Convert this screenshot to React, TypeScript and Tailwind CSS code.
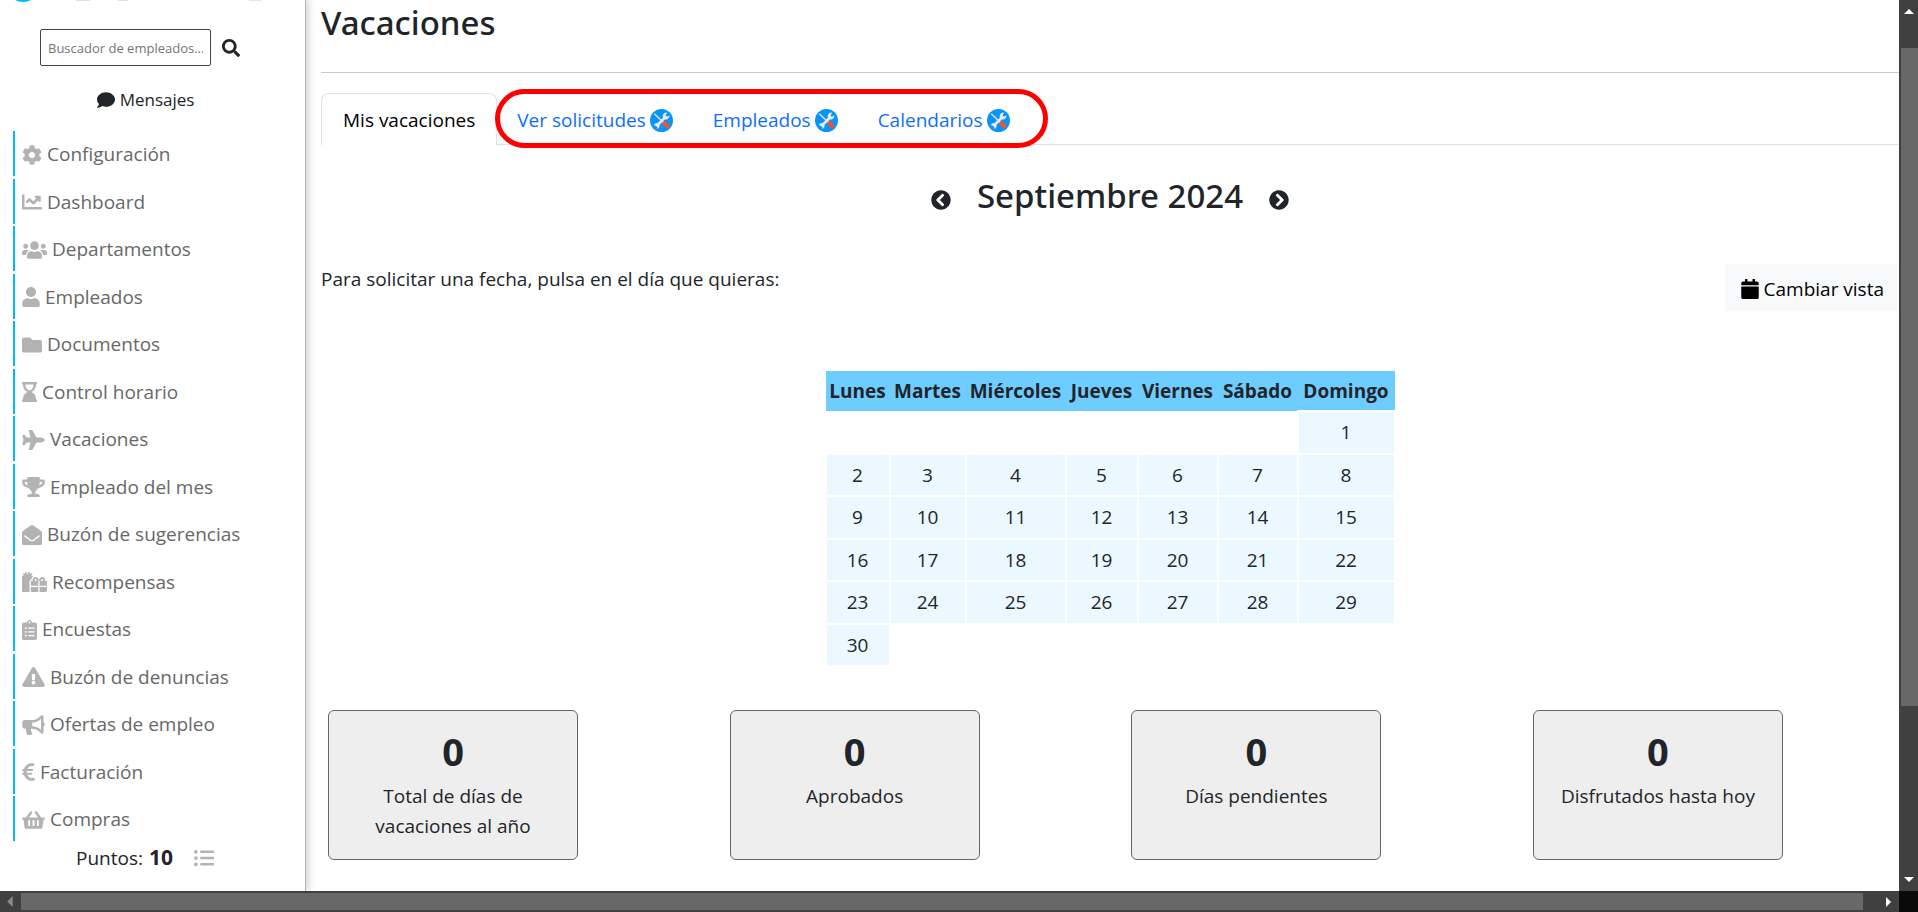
import type { ReactNode } from "react";
import type { IconType } from "react-icons";
import {
    FaBullhorn,
    FaCalendar,
    FaChartLine,
    FaChevronCircleLeft,
    FaChevronCircleRight,
    FaClipboardList,
    FaCog,
    FaComment,
    FaEnvelopeOpen,
    FaEuroSign,
    FaExclamationTriangle,
    FaFolder,
    FaGifts,
    FaHourglassEnd,
    FaListUl,
    FaPlane,
    FaSearch,
    FaShoppingBasket,
    FaTrophy,
    FaUser,
    FaUsers,
} from "react-icons/fa";

type MenuItem = {
    label: string
    icon: IconType
    width: string
}

const menu: MenuItem[] = [
    { label: 'Configuración', icon: FaCog, width: 'w-5' },
    { label: 'Dashboard', icon: FaChartLine, width: 'w-5' },
    { label: 'Departamentos', icon: FaUsers, width: 'w-[25px]' },
    { label: 'Empleados', icon: FaUser, width: 'w-[18px]' },
    { label: 'Documentos', icon: FaFolder, width: 'w-5' },
    { label: 'Control horario', icon: FaHourglassEnd, width: 'w-[15px]' },
    { label: 'Vacaciones', icon: FaPlane, width: 'w-[23px]' },
    { label: 'Empleado del mes', icon: FaTrophy, width: 'w-[23px]' },
    { label: 'Buzón de sugerencias', icon: FaEnvelopeOpen, width: 'w-5' },
    { label: 'Recompensas', icon: FaGifts, width: 'w-[25px]' },
    { label: 'Encuestas', icon: FaClipboardList, width: 'w-[15px]' },
    { label: 'Buzón de denuncias', icon: FaExclamationTriangle, width: 'w-[23px]' },
    { label: 'Ofertas de empleo', icon: FaBullhorn, width: 'w-[23px]' },
    { label: 'Facturación', icon: FaEuroSign, width: 'w-[13px]' },
    { label: 'Compras', icon: FaShoppingBasket, width: 'w-[23px]' },
]

const adminTabs = ['Ver solicitudes', 'Empleados', 'Calendarios']

const days = [
    { name: 'Lunes', width: 'w-16' },
    { name: 'Martes', width: 'w-[76px]' },
    { name: 'Miércoles', width: 'w-[100px]' },
    { name: 'Jueves', width: 'w-[72px]' },
    { name: 'Viernes', width: 'w-20' },
    { name: 'Sábado', width: 'w-20' },
    { name: 'Domingo', width: 'w-[97px]' },
]

// Septiembre 2024 empieza en domingo
const weeks: (number | null)[][] = [
    [null, null, null, null, null, null, 1],
    [2, 3, 4, 5, 6, 7, 8],
    [9, 10, 11, 12, 13, 14, 15],
    [16, 17, 18, 19, 20, 21, 22],
    [23, 24, 25, 26, 27, 28, 29],
    [30, null, null, null, null, null, null],
]

const totals = [
    { label: 'Total de días de vacaciones al año', value: 0 },
    { label: 'Aprobados', value: 0 },
    { label: 'Días pendientes', value: 0 },
    { label: 'Disfrutados hasta hoy', value: 0 },
]

function ToolsIcon() {
    return (
        <svg viewBox="0 0 24 24" className="h-[23px] w-[23px] shrink-0" aria-hidden="true">
            <circle cx="12" cy="12" r="12" fill="#0a94f8" />
            <path d="M4.500 5 14 14" stroke="#dfe3e8" strokeWidth="1.500" />
            <path d="M6.500 18 16.500 8" stroke="#e6e9ee" strokeWidth="2.800" />
            <path d="M17.800 3.800 16.300 6.700 17.700 8.100 20.300 6.600A3.800 3.800 0 0 1 14.300 10.200 3.800 3.800 0 0 1 17.800 3.800Z" fill="#e6e9ee" />
            <path d="M4 17.200A3 3 0 1 1 7.300 20.500L8 18.400 6.200 16.900Z" fill="#e6e9ee" />
            <path d="M13.800 13.800 19.300 19" stroke="#f4512c" strokeWidth="4.400" />
        </svg>
    )
}

function Sidebar() {
    return (
        <aside className="flex w-[306px] shrink-0 flex-col overflow-hidden border-r border-[#b5b5b5] shadow-[2px_0_8px_rgba(0,0,0,0.2)]">
            <svg viewBox="0 0 305 4" className="h-1 w-full shrink-0" aria-hidden="true">
                <ellipse cx="23" cy="-6" rx="12" ry="8" fill="#00bcf2" />
                <path d="M76 0h14M118 0h10" stroke="#d3dfec" strokeWidth="2" />
                <path d="M249 0h13" stroke="#c9f1fc" strokeWidth="2" />
            </svg>
            <form className="mt-[25px] flex items-center pl-10">
                <input
                    type="text"
                    name="buscador"
                    aria-label="Buscador de empleados"
                    placeholder="Buscador de empleados..."
                    className="h-[37px] w-[171px] rounded-xs border border-[#444] px-[7px] text-[13px] placeholder:text-[#757575]"
                />
                <button type="button" aria-label="Buscar" className="ml-[11px]">
                    <FaSearch className="size-[18px]" />
                </button>
            </form>
            <a href="#mensajes" className="mt-[19px] flex items-center justify-center gap-[5px] pr-[14px] text-[17px] leading-[30px]">
                <FaComment className="size-[18px]" />
                Mensajes
            </a>
            <nav className="mt-4 flex h-[710px] shrink-0 flex-col justify-between pl-[13px]">
                {menu.map(({ label, icon: Icon, width }) => (
                    <a
                        key={label}
                        href="#menu"
                        className="flex h-[45px] items-center gap-[5px] border-l-2 border-[#00b9f1] pt-[2px] pl-[7px] text-[19px] text-[#686868]"
                    >
                        <Icon className={`h-5 shrink-0 text-[#b3b3b3] ${width}`} />
                        {label}
                    </a>
                ))}
            </nav>
            <div className="flex h-[34px] items-center pl-[76px] text-[19px]">
                Puntos:
                <strong className="ml-[6px] text-[21px]">10</strong>
                <button type="button" aria-label="Ver puntos" className="ml-[21px]">
                    <FaListUl className="size-5 text-[#b3b3b3]" />
                </button>
            </div>
        </aside>
    )
}

function Tabs() {
    return (
        <div className="relative mt-5 flex border-b border-[#dee2e6]">
            <button type="button" className="-mb-px h-[52px] rounded-t-lg border border-b-0 border-[#dee2e6] bg-white px-[21px] text-black">
                Mis vacaciones
            </button>
            {adminTabs.map(tab => (
                <button key={tab} type="button" className="-mb-px flex h-[52px] items-center gap-1 px-5 pt-[2px] text-[#0d6efd]">
                    {tab}
                    <ToolsIcon />
                </button>
            ))}
            {/* Marca roja sobre las pestañas de administrador */}
            <div className="pointer-events-none absolute -top-1 left-[174px] h-[59px] w-[553px] rounded-full border-5 border-[#ff0000]" />
        </div>
    )
}

function Calendar() {
    return (
        <table className="mx-auto mt-[60px] h-[296px] border-collapse text-center">
            <thead>
                <tr className="h-10 bg-[#6fccff]">
                    {days.map(day => (
                        <th key={day.name} className={day.width}>{day.name}</th>
                    ))}
                </tr>
            </thead>
            <tbody>
                {weeks.map((week, i) => (
                    <tr key={i} className="h-[42px]">
                        {week.map((day, j) => (
                            <td key={j} className={day ? 'border-2 border-white bg-[#ecf8ff]' : ''}>
                                {day}
                            </td>
                        ))}
                    </tr>
                ))}
            </tbody>
        </table>
    )
}

function Arrow({ className, children }: { className: string, children?: ReactNode }) {
    return (
        <svg viewBox="0 0 10 10" className={className} fill="currentColor" aria-hidden="true">
            {children}
        </svg>
    )
}

function VerticalScroll() {
    return (
        <div className="flex w-[19px] shrink-0 flex-col items-center bg-[#404040] text-white">
            <div className="flex h-12 w-full shrink-0 justify-center pt-[7px]">
                <Arrow className="size-[10px]"><path d="M0 7 5 2l5 5z" /></Arrow>
            </div>
            <div className="ml-[2px] w-[17px] grow-[657] bg-[#686868]" />
            <div className="grow-[168]" />
            <Arrow className="mb-[7px] size-[10px] shrink-0"><path d="M0 3h10L5 8z" /></Arrow>
        </div>
    )
}

function HorizontalScroll() {
    return (
        <div className="flex h-[21px] shrink-0 bg-[#404040]">
            <div className="flex grow items-center">
                <Arrow className="mx-[5px] size-[11px] text-[#8a8a8a]"><path d="M7 0v10L2 5z" /></Arrow>
                <div className="h-[17px] grow bg-[#686868]" />
                <Arrow className="mr-[6px] ml-5 size-[10px] text-white"><path d="M3 0v10l5-5z" /></Arrow>
            </div>
            <div className="w-[19px] bg-[#0a0a0a]" />
        </div>
    )
}

export default function App() {
    return (
        <div className="flex h-screen flex-col overflow-hidden bg-white font-['Open_Sans','Noto_Sans',sans-serif] text-[#212529]">
            <div className="flex min-h-0 grow">
                <Sidebar />
                <main className="min-w-0 grow overflow-hidden pl-[15px] text-[19px] leading-[30px]">
                    <h1 className="font-['Noto_Sans',sans-serif] text-[33px] leading-[46px] font-medium">Vacaciones</h1>
                    <hr className="mt-[26px] border-[#c8c9ca]" />
                    <Tabs />
                    <div className="mt-7 flex items-center justify-center gap-[26px]">
                        <button type="button" aria-label="Mes anterior" className="pt-2">
                            <FaChevronCircleLeft className="size-5" />
                        </button>
                        <h2 className="font-['Noto_Sans',sans-serif] text-[33px] leading-[46px] font-medium">Septiembre 2024</h2>
                        <button type="button" aria-label="Mes siguiente" className="pt-2">
                            <FaChevronCircleRight className="size-5" />
                        </button>
                    </div>
                    <div className="mt-[45px] flex items-start justify-between">
                        <p>Para solicitar una fecha, pulsa en el día que quieras:</p>
                        <button type="button" className="flex h-[47px] items-center gap-1 bg-[#f8f9fa] px-[15px] pt-[2px] text-black">
                            <FaCalendar className="size-5" />
                            Cambiar vista
                        </button>
                    </div>
                    <Calendar />
                    <section className="mt-[43px] flex justify-between pr-[116px] pl-[7px] text-center">
                        {totals.map(total => (
                            <article key={total.label} className="h-[150px] w-[250px] rounded-md border border-[#666] bg-[#eee] px-6 pt-4">
                                <strong className="block text-[38px] leading-[48px]">{total.value}</strong>
                                <p className="mt-[6px]">{total.label}</p>
                            </article>
                        ))}
                    </section>
                </main>
                <VerticalScroll />
            </div>
            <HorizontalScroll />
        </div>
    )
}
